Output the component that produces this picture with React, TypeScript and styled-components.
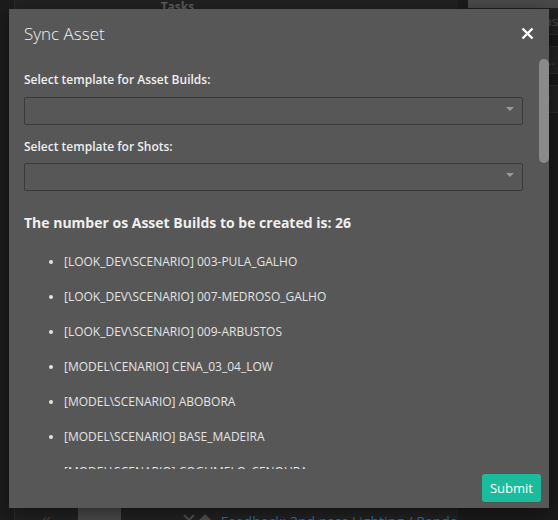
import styled, { createGlobalStyle } from "styled-components";

const GlobalStyle = createGlobalStyle`
  html, body, #root {
    height: 100%;
  }
  body {
    margin: 0;
    overflow: hidden;
    background: #1c1c1c;
    font-family: "Open Sans", "Liberation Sans", sans-serif;
  }
  * {
    box-sizing: border-box;
  }
`;

const Page = styled.div`
  position: relative;
  display: flex;
  height: 100%;
`;

const Gutter = styled.div`
  width: 15px;
  background: #1c1c1c;
  border-right: 1px solid #2b2b2b;
`;

const MainPanel = styled.div`
  width: 455px;
  display: flex;
  flex-direction: column;
  background: #212121;
  overflow: hidden;
`;

const PanelHead = styled.div`
  flex: none;
  height: 26px;
  padding-left: 146px;
  font-size: 12px;
  line-height: 14px;
  font-weight: 700;
  color: #5c5c5c;
`;

const TaskArea = styled.div`
  flex: none;
  height: 482px;
`;

const TaskRow = styled.div`
  flex: none;
  display: flex;
  align-items: flex-start;
  height: 30px;
  overflow: hidden;

  & > * {
    flex: none;
  }
`;

const Collapse = styled.span`
  width: 63px;
  padding: 3px 0 0 28px;
  font-size: 13px;
  line-height: 14px;
  color: #4c4c4c;
`;

const Thumb = styled.div`
  width: 43px;
  height: 30px;
  background: #4a4a4a;
`;

const RowIcons = styled.div`
  display: flex;
  gap: 4px;
  padding: 4px 0 0 62px;
`;

const TaskLink = styled.span`
  margin-left: 10px;
  padding-top: 6px;
  font-size: 14px;
  line-height: 16px;
  color: #2f6c9a;
  white-space: nowrap;
`;

const SidePanel = styled.div`
  flex: 1;
  display: flex;
  flex-direction: column;
  background: #1b1b1b;
  padding-left: 10px;
`;

const SideCard = styled.div`
  height: 8px;
  background: #4a4a4a;
`;

const SideRow = styled.div<{ $dark?: boolean }>`
  height: ${(p) => (p.$dark ? "12px" : "27px")};
  background: ${(p) => (p.$dark ? "#181818" : "#202020")};
  border-bottom: 1px solid #2a2a2a;
  padding-left: 69px;
  font-size: 13px;
  line-height: 27px;
  color: #4a4a4a;
  white-space: nowrap;
  overflow: hidden;
`;

const Overlay = styled.div`
  position: absolute;
  inset: 0;
  display: flex;
  padding: 9px 9px 12px 9px;
`;

const Modal = styled.div`
  flex: 1;
  display: flex;
  flex-direction: column;
  background: #575757;
  box-shadow: 0 4px 16px rgba(0, 0, 0, 0.45);
  min-height: 0;
`;

const Header = styled.div`
  height: 49px;
  flex: 0 0 49px;
  display: flex;
  align-items: center;
  justify-content: space-between;
  padding: 0 15px;
`;

const Title = styled.h4`
  margin: 0;
  font-size: 17px;
  font-weight: 300;
  color: #f2f2f2;
`;

const CloseButton = styled.button`
  display: flex;
  padding: 0;
  border: 0;
  background: none;
  cursor: pointer;
`;

const BodyWrap = styled.div`
  position: relative;
  flex: 1;
  min-height: 0;
  display: flex;
`;

const Body = styled.div`
  flex: 1;
  overflow-y: auto;
  scrollbar-width: none;
  padding: 13px 26px 0 15px;
`;

/* the scroll thumb, drawn over the scroll area's right edge */
const ScrollThumb = styled.div`
  position: absolute;
  top: 1px;
  right: 0;
  width: 10px;
  height: 104px;
  border-radius: 5px;
  background: #8a8a8a;
`;

const BodyInner = styled.div`
  min-height: 1611px;
`;

const Label = styled.label`
  display: block;
  font-size: 12px;
  line-height: 18px;
  font-weight: 600;
  color: #efefef;
`;

const SelectBox = styled.div<{ $gap: number }>`
  position: relative;
  height: 28px;
  margin: ${(p) => p.$gap}px 0 13px;
  border: 1px solid #3a3a3a;
  border-radius: 2px;
`;

const Caret = styled.svg`
  position: absolute;
  right: 8px;
  top: 9px;
`;

const Count = styled.h3`
  margin: 22px 0 20px;
  font-size: 14px;
  line-height: 20px;
  font-weight: 700;
  color: #efefef;
`;

const List = styled.ul`
  margin: 0;
  padding-left: 40px;
`;

const Item = styled.li`
  font-size: 12px;
  line-height: 18px;
  margin-bottom: 17px;
  color: #e4e4e4;
`;

const Footer = styled.div`
  flex: 0 0 39px;
  display: flex;
  align-items: center;
  justify-content: flex-end;
  padding: 0 8px 1px 0;
`;

const SubmitButton = styled.button`
  height: 28px;
  padding: 0 8px;
  border: 0;
  border-radius: 3px;
  background: #1abc9c;
  color: #ffffff;
  font-family: inherit;
  font-size: 13px;
  cursor: pointer;
`;

const assets = [
  "[LOOK_DEV\\SCENARIO] 003-PULA_GALHO",
  "[LOOK_DEV\\SCENARIO] 007-MEDROSO_GALHO",
  "[LOOK_DEV\\SCENARIO] 009-ARBUSTOS",
  "[MODEL\\CENARIO] CENA_03_04_LOW",
  "[MODEL\\SCENARIO] ABOBORA",
  "[MODEL\\SCENARIO] BASE_MADEIRA",
  "[MODEL\\SCENARIO] COGUMELO_CENOURA",
];

function SelectField({ gap }: { gap: number }) {
  return (
    <SelectBox $gap={gap}>
      <Caret width="8" height="4" viewBox="0 0 8 4">
        <path d="M0 0h8L4 4z" fill="#9a9a9a" />
      </Caret>
    </SelectBox>
  );
}

export default function App() {
  return (
    <>
      <GlobalStyle />
      <Page>
        <Gutter />
        <MainPanel>
          <PanelHead>Tasks</PanelHead>
          <TaskArea />
          <TaskRow>
            <Collapse>‹‹</Collapse>
            <Thumb />
            <RowIcons>
              <svg width="12" height="12" viewBox="0 0 12 12">
                <path d="M1 3l5 5 5-5" stroke="#4d4d4d" strokeWidth="2" fill="none" />
              </svg>
              <svg width="12" height="12" viewBox="0 0 12 12">
                <path d="M0 8L6 2l6 6z" fill="#4d4d4d" />
              </svg>
            </RowIcons>
            <TaskLink>Feedback: 2nd pass Lighting / Rendering / C</TaskLink>
          </TaskRow>
        </MainPanel>
        <SidePanel>
          <SideCard />
          <SideRow>Tas</SideRow>
          <SideRow $dark />
          <SideRow>e...</SideRow>
          <SideRow $dark />
          <SideRow>er</SideRow>
        </SidePanel>

        <Overlay>
          <Modal>
            <Header>
              <Title>Sync Asset</Title>
              <CloseButton aria-label="Close">
                <svg width="13" height="13" viewBox="0 0 13 13">
                  <path d="M1.5 1.5l10 10M11.5 1.5l-10 10" stroke="#ffffff" strokeWidth="2.4" />
                </svg>
              </CloseButton>
            </Header>
            <BodyWrap>
              <Body>
                <BodyInner>
                  <Label>Select template for Asset Builds:</Label>
                  <SelectField gap={8} />
                  <Label>Select template for Shots:</Label>
                  <SelectField gap={7} />
                  <Count>The number os Asset Builds to be created is: 26</Count>
                  <List>
                    {assets.map((a) => (
                      <Item key={a}>{a}</Item>
                    ))}
                  </List>
                </BodyInner>
              </Body>
              <ScrollThumb />
            </BodyWrap>
            <Footer>
              <SubmitButton>Submit</SubmitButton>
            </Footer>
          </Modal>
        </Overlay>
      </Page>
    </>
  );
}
